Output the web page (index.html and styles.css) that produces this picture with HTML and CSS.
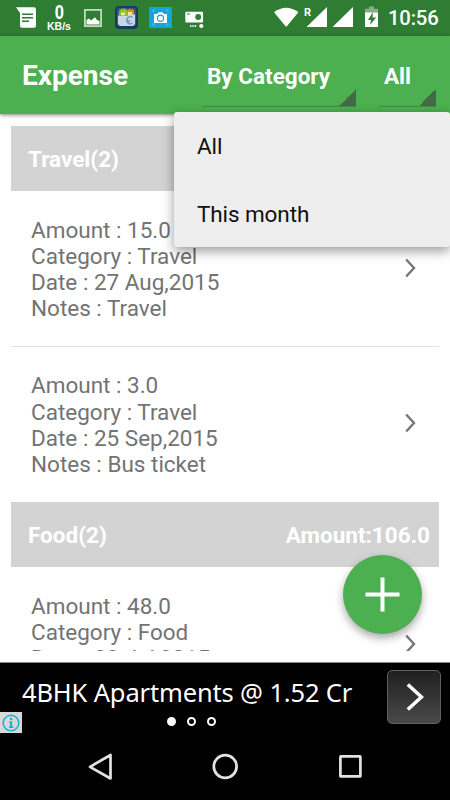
FILE: index.html
```html
<!DOCTYPE html>
<html lang="en">
<head>
<meta charset="utf-8">
<title>Expense</title>
<link rel="stylesheet" href="styles.css">
</head>
<body>
<div class="phone">
  <header class="status">
    <svg class="status-icon doc" width="20" height="22" viewBox="0 0 20 22"><path fill="#fff" d="M0 0.3H18Q20 .3 20 2.3V18.7Q20 20.7 18 20.7H6Q4 20.7 4 18.7V6Z"/><path stroke="#2e7d32" stroke-width="1.5" d="M6 7.3H17M6 10.8H17M6 14.3H13"/></svg>
    <div class="speed"><span class="speed-num">0</span><span class="speed-unit">KB/s</span></div>
    <svg class="status-icon photo" width="18" height="18" viewBox="0 0 18 18"><rect x=".9" y=".9" width="16.2" height="16.2" fill="none" stroke="#d5e5d6" stroke-width="1.6"/><path fill="#fff" d="M2.5 15.5V11L5 9.5 7 11.5 11 8.2 13 11 15.5 12V15.5Z"/></svg>
    <svg class="status-icon folder" width="23" height="23" viewBox="0 0 23 23"><rect width="23" height="23" rx="4" fill="#183c5c"/><rect x="2" y="2" width="19" height="18" rx="2" fill="#315c80"/><path fill="#8fc31f" d="M4 9V6Q5 2.5 8.5 2.5T13 6V9Z"/><path fill="#f58220" d="M12 9V4.5Q15 1.5 19 4.5V9Z"/><path fill="#f1e6a0" d="M6 6.5h4v3H6zM13 6h4v3h-4z"/><path fill="#c6d9e8" d="M3 9.5H12L14 8.5H20V18L18 20H5L3 18Z"/><path d="M17.5 11.5A3.5 3.5 0 1 0 17.5 17M12.5 15h3" fill="none" stroke="#7796b5" stroke-width="1.5"/></svg>
    <svg class="status-icon camera" width="23" height="21" viewBox="0 0 23 21"><rect width="23" height="21" fill="#12a5d9"/><path d="M4 5V3H6M17 3H19V5M4 16V18H6M17 18H19V16" stroke="#53c3e8" fill="none"/><path fill="#fff" d="M5 7H8L9.5 5.3H13.5L15 7H18V16H5Z"/><circle cx="11.5" cy="11.3" r="3.1" fill="#fff" stroke="#12a5d9" stroke-width="1.2"/></svg>
    <svg class="status-icon recorder" width="19" height="18" viewBox="0 0 19 18"><rect x=".3" y=".8" width="17.8" height="10.6" rx="1" fill="#fff"/><circle cx="13.2" cy="6" r="3" fill="#2e7d32"/><path stroke="#2e7d32" d="M2 3H5"/><path stroke="#d5e5d6" stroke-width="2" stroke-dasharray="1.5 .8" d="M5 15H12"/><circle cx="16.3" cy="15" r="2.1" fill="#fff"/></svg>
    <svg class="status-icon signals" width="106" height="24" viewBox="0 0 106 24"><path fill="#fff" d="M0 5.2Q12.2-3.8 24.4 5.2L12.2 20Z"/><path fill="#fff" d="M53 0V20H32.5ZM79 0V20H58.5Z"/><path fill="#81b184" d="M95-.5H100V1.8H104V6H91V1.8H95Z"/><path fill="#fff" d="M91 5.5H104V20H91Z"/><path fill="#2e7d32" d="M99 5 94 13H97L96 18 102 10.5H98.5Z"/><text class="roaming" x="30" y="8.5">R</text></svg>
    <time class="clock">10:56</time>
  </header>
  <div class="toolbar">
    <h1 class="title">Expense</h1>
    <div class="spinner by"><span>By Category</span></div>
    <div class="spinner range"><span>All</span></div>
    <div class="menu">
      <div class="option">All</div>
      <div class="option">This month</div>
    </div>
  </div>
  <main class="list">
    <div class="group"><span>Travel(2)</span></div>
    <div class="item"><div>Amount : 15.0<br>Category : Travel<br>Date : 27 Aug,2015<br>Notes : Travel</div><svg class="chevron" width="11" height="20" viewBox="0 0 11 20"><path d="M1.2 1.5 9 10 1.2 18.5"/></svg></div>
    <div class="item divided"><div>Amount : 3.0<br>Category : Travel<br>Date : 25 Sep,2015<br>Notes : Bus ticket</div><svg class="chevron" width="11" height="20" viewBox="0 0 11 20"><path d="M1.2 1.5 9 10 1.2 18.5"/></svg></div>
    <div class="group"><span>Food(2)</span><span>Amount:106.0</span></div>
    <div class="item"><div>Amount : 48.0<br>Category : Food<br>Date : 23 Jul,2015</div><svg class="chevron" width="11" height="20" viewBox="0 0 11 20"><path d="M1.2 1.5 9 10 1.2 18.5"/></svg></div>
  </main>
  <div class="fab"><svg width="35" height="35" viewBox="0 0 35 35"><path d="M17.5 .5V34.5M.5 17.5H34.5" stroke="#fff" stroke-width="4"/></svg></div>
  <section class="ad">
    <div class="ad-text">4BHK Apartments @ 1.52 Cr</div>
    <div class="ad-go"><svg width="18" height="28" viewBox="0 0 18 28"><path d="M1.8 1.5 15.4 14 1.8 26.5" fill="none" stroke="#fff" stroke-width="3.5"/></svg></div>
    <div class="dots"><i class="dot on"></i><i class="dot"></i><i class="dot"></i></div>
    <div class="info"><svg width="18" height="18" viewBox="0 0 18 18"><circle cx="9" cy="9" r="7.8" fill="none" stroke="#18b4d8" stroke-width="1.6"/><path fill="#18b4d8" d="M8 3.8H10.2V6H8ZM7 7.2H10.2V12.6H11.4V14H7V12.6H8V8.6H7Z"/></svg></div>
  </section>
  <nav class="nav">
    <svg width="25" height="28" viewBox="0 0 25 28"><path d="M22.5 2V25.5L2 13.8Z"/></svg>
    <svg width="27" height="27" viewBox="0 0 27 27"><circle cx="13.2" cy="13.5" r="11.4"/></svg>
    <svg width="25" height="25" viewBox="0 0 25 25"><rect x="2.4" y="2.4" width="20" height="20" rx=".5"/></svg>
  </nav>
</div>
</body>
</html>
```
FILE: styles.css
```css
* { box-sizing: border-box; }
body { margin: 0; font-family: Roboto, "Liberation Sans", sans-serif; background: #fff; }
.phone { position: relative; width: 450px; height: 800px; display: flex; flex-direction: column; overflow: hidden; }
svg { display: block; flex: none; overflow: visible; }

.status { height: 35.5px; flex: none; background: #2e7d32; color: #fff; display: flex; align-items: flex-start; }
.doc { margin: 7px 0 0 16px; }
.speed { width: 26px; margin: 3px 0 0 10px; display: flex; flex-direction: column; align-items: center; font-family: "Liberation Sans", sans-serif; font-weight: bold; }
.speed-num { font-size: 19.5px; line-height: 19px; transform: scaleX(.85); }
.speed-unit { font-size: 10.5px; line-height: 9px; }
.photo { margin: 9px 0 0 12px; }
.folder { margin: 6px 0 0 13px; }
.camera { margin: 7px 0 0 11px; }
.recorder { margin: 11px 0 0 13px; }
.signals { margin: 7px 0 0 70px; }
.roaming { font-size: 11px; font-weight: bold; fill: #fff; font-family: Roboto, sans-serif; }
.clock { margin: 6px 0 0 8px; font-size: 20.3px; line-height: 24px; font-weight: 500; letter-spacing: -.2px; }

.toolbar { position: relative; z-index: 2; height: 78.5px; flex: none; display: flex; background: #4caf50; color: #fff; font-weight: bold; box-shadow: 0 1px 4px rgba(0,0,0,.5); }
.title { width: 180px; margin: 24px 0 0 22px; font-size: 28px; line-height: 32px; font-weight: bold; }
.spinner { height: 54px; margin-top: 17px; padding: 9px 0 0 5px; font-size: 22.5px; line-height: 28px; border-bottom: 1px solid #3f8f45; background: linear-gradient(135deg, transparent 50%, #426b45 50%) right bottom / 17px 17px no-repeat; }
.by { width: 154px; }
.range { width: 57px; margin-left: 23px; padding-left: 5px; }
.menu { position: absolute; left: 174px; top: 76.5px; width: 276px; height: 135px; background: #eee; color: #111; border-radius: 3px; box-shadow: 0 4px 12px rgba(0,0,0,.4); font-weight: normal; }
.option { height: 67.5px; padding-left: 23px; font-size: 22.5px; line-height: 68px; letter-spacing: -.1px; }

.list { height: 537px; flex: none; padding: 11.5px 11px 0; overflow: hidden; }
.group { height: 65.5px; padding: 0 9px 0 17px; display: flex; justify-content: space-between; background: #d3d3d3; color: #fff; font-size: 22.5px; line-height: 67px; font-weight: bold; }
.item { height: 155.4px; padding: 25.5px 23px 0 20px; display: flex; justify-content: space-between; color: #737373; font-size: 22.5px; line-height: 26.25px; }
.divided { border-top: 1px solid #e2e2e2; padding-top: 25px; }
.chevron { margin-top: 41px; }
.chevron path { fill: none; stroke: #777; stroke-width: 2.4; }

.fab { position: absolute; left: 343px; top: 555px; width: 79px; height: 79px; border-radius: 50%; background: #4caf50; display: flex; align-items: center; justify-content: center; box-shadow: 0 4px 9px rgba(0,0,0,.35); }

.ad { position: relative; height: 71px; margin-top: 11px; flex: none; display: flex; justify-content: space-between; background: #000; border-top: 1px solid #888; color: #fff; }
.ad-text { margin: 11px 0 0 22px; font-family: "Noto Sans", "Open Sans", sans-serif; font-size: 25.5px; line-height: 36px; letter-spacing: -.15px; white-space: nowrap; }
.ad-go { width: 54px; height: 54px; margin: 7px 9.5px 0 0; border: 1.5px solid #606060; border-radius: 5px; background: linear-gradient(#202020, #494949); display: flex; align-items: center; justify-content: center; padding-left: 3px; }
.dots { position: absolute; left: 167px; top: 54px; display: flex; gap: 11px; }
.dot { width: 9px; height: 9px; border: 2px solid #fff; border-radius: 50%; }
.on { background: #fff; }
.info { position: absolute; left: 0; top: 49px; width: 22px; height: 21px; background: #d8d8d8; display: flex; align-items: center; justify-content: center; }

.nav { flex: 1; background: #000; display: flex; justify-content: space-between; align-items: center; padding: 0 87px 0 88px; }
.nav svg { fill: none; stroke: #e2e2e2; stroke-width: 2.7; stroke-linejoin: round; }
```
